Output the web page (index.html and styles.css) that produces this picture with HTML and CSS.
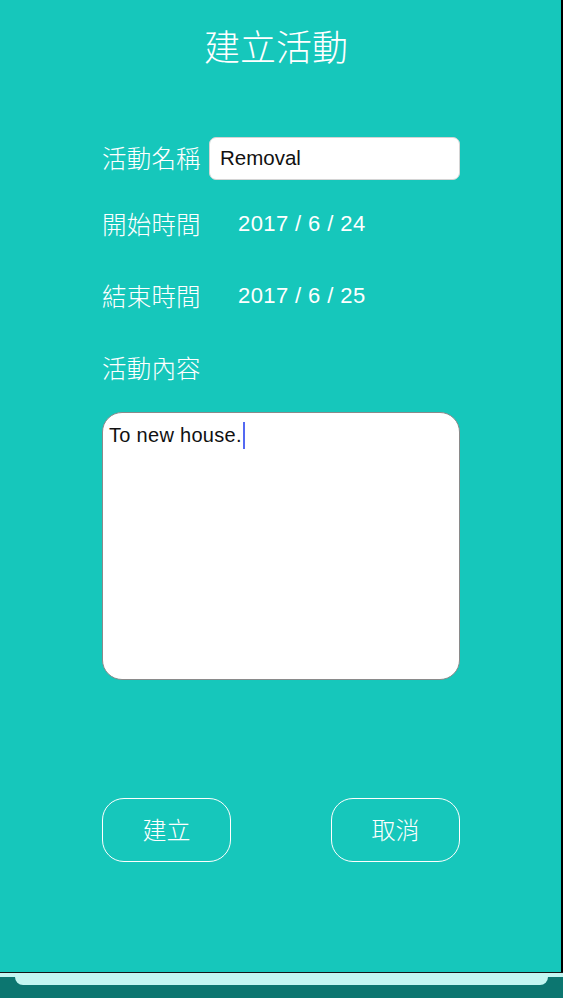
FILE: index.html
```html
<!DOCTYPE html>
<html lang="zh-Hant">
<head>
<meta charset="utf-8">
<title>建立活動</title>
<link rel="stylesheet" href="styles.css">
</head>
<body>
<div class="device">
  <main class="screen">
    <h1 class="title">建立活動</h1>
    <div class="form">
      <div class="row row-name">
        <span class="label">活動名稱</span>
        <div class="field">Removal</div>
      </div>
      <div class="row row-start">
        <span class="label">開始時間</span>
        <span class="date">2017 / 6 / 24</span>
      </div>
      <div class="row">
        <span class="label">結束時間</span>
        <span class="date">2017 / 6 / 25</span>
      </div>
      <div class="row row-content">
        <span class="label">活動內容</span>
      </div>
      <div class="content-box">To new house.<span class="caret"></span></div>
      <div class="actions">
        <button class="btn" type="button">建立</button>
        <button class="btn" type="button">取消</button>
      </div>
    </div>
  </main>
  <div class="divider"></div>
  <div class="home"><div class="home-bar"></div></div>
</div>
</body>
</html>
```

FILE: styles.css
```css
html, body {
  margin: 0;
  padding: 0;
}
body {
  background: #000;
  width: 563px;
  height: 998px;
  overflow: hidden;
}
.device {
  width: 563px;
  height: 998px;
  display: flex;
  flex-direction: column;
}
.screen {
  width: 561px;
  height: 972px;
  background: #16c7bb;
  box-sizing: border-box;
  padding-top: 23px;
  font-family: "Noto Sans CJK TC", "Noto Sans CJK SC", sans-serif;
  color: #fff;
}
.title {
  margin: 0;
  width: 552px;
  text-align: center;
  font-size: 36px;
  line-height: 44px;
  font-weight: 300;
}
.form {
  margin: 69px 0 0 102px;
  width: 358px;
  display: flex;
  flex-direction: column;
}
.row {
  height: 44px;
  display: flex;
  align-items: center;
  margin-bottom: 24px;
}
.row-name {
  margin-bottom: 21.5px;
}
.row-start {
  margin-bottom: 28px;
}
.row-content {
  margin-top: 4.5px;
  margin-bottom: 22px;
}
.label {
  width: 100px;
  font-size: 24.5px;
  line-height: 30px;
  font-weight: 300;
  white-space: nowrap;
  letter-spacing: 0.2px;
}
.field {
  margin-left: 7px;
  width: 251px;
  height: 43px;
  box-sizing: border-box;
  background: #fff;
  border: 1px solid #d4d4d4;
  border-radius: 7px;
  padding-left: 10px;
  display: flex;
  align-items: center;
  font-family: "Liberation Sans", Arial, sans-serif;
  font-size: 20.5px;
  color: #111;
}
.date {
  margin-left: 36px;
  font-family: "Liberation Sans", Arial, sans-serif;
  font-size: 22px;
  letter-spacing: 0.4px;
  color: #fff;
}
.content-box {
  width: 358px;
  height: 268px;
  box-sizing: border-box;
  background: #fff;
  border: 1px solid #8a8a8a;
  border-radius: 20px;
  padding: 9px 6px;
  font-family: "Liberation Sans", Arial, sans-serif;
  font-size: 20px;
  line-height: 24px;
  letter-spacing: 0.3px;
  color: #111;
}
.caret {
  display: inline-block;
  width: 2px;
  height: 27px;
  margin-left: 1px;
  vertical-align: -7px;
  background: #5469f2;
}
.actions {
  margin-top: 118px;
  display: flex;
  justify-content: space-between;
}
.btn {
  width: 129px;
  height: 64px;
  box-sizing: border-box;
  background: transparent;
  border: 1.5px solid #fff;
  border-radius: 22px;
  color: #fff;
  font-family: "Noto Sans CJK TC", "Noto Sans CJK SC", sans-serif;
  font-size: 24px;
  font-weight: 300;
  padding: 0 0 3px;
}
.divider {
  height: 1px;
  background: #151515;
}
.home {
  flex: 1;
  background: #0c7670;
  border-top: 4px solid #c3f6f1;
  padding: 0 15px;
}
.home-bar {
  height: 8px;
  background: #c3f6f1;
  border-radius: 0 0 14px 14px;
}
```
